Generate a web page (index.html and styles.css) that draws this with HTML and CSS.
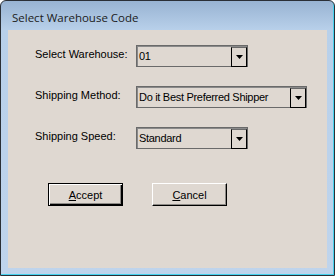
FILE: index.html
```html
<!DOCTYPE html>
<html lang="en">
<head>
	<meta charset="UTF-8">
	<title>Select Warehouse Code</title>
	<link rel="stylesheet" href="styles.css">
</head>
<body>
	<div class="window">
		<div class="title">Select Warehouse Code</div>
		<div class="client">
			<div class="form">
				<label class="label">Select Warehouse:</label>
				<div class="combo short">
					<span class="value">01</span>
					<span class="drop"><svg width="7" height="4" viewBox="0 0 7 4"><polygon points="0,0 7,0 3.5,4" fill="#000"/></svg></span>
				</div>

				<label class="label">Shipping Method:</label>
				<div class="combo long">
					<span class="value">Do it Best Preferred Shipper</span>
					<span class="drop"><svg width="7" height="4" viewBox="0 0 7 4"><polygon points="0,0 7,0 3.5,4" fill="#000"/></svg></span>
				</div>

				<label class="label">Shipping Speed:</label>
				<div class="combo short">
					<span class="value">Standard</span>
					<span class="drop"><svg width="7" height="4" viewBox="0 0 7 4"><polygon points="0,0 7,0 3.5,4" fill="#000"/></svg></span>
				</div>
			</div>

			<div class="buttons">
				<button class="btn default"><u>A</u>ccept</button>
				<button class="btn"><u>C</u>ancel</button>
			</div>
		</div>
	</div>
</body>
</html>
```

FILE: styles.css
```css
body, div {
	margin: 0;
	padding: 0;
}
body {
	background: #fff;
	font: 11px "Liberation Sans", Arial, sans-serif;
	color: #000;
}
.window {
	box-sizing: border-box;
	width: 335px;
	height: 276px;
	padding: 0 7px 7px 7px;
	border: 1px solid #2a2f36;
	border-radius: 6px 6px 0 0;
	background: linear-gradient(#98b3d2, #b8d0ea 29px, #bfd4ec);
	box-shadow: inset -1px -1px 0 #45d2ee;
	display: flex;
	flex-direction: column;
}
.title {
	box-sizing: border-box;
	height: 29px;
	padding: 4px 0 0 4px;
	font: 11.5px "Open Sans", "Noto Sans", sans-serif;
	line-height: 26px;
	color: #1b1b1b;
}
.client {
	flex: 1;
	background: #dfd8d1;
	padding: 15px 0 0 27px;
}
.form {
	display: grid;
	grid-template-columns: 101px auto;
	row-gap: 19px;
	align-items: center;
}
.label {
	padding-bottom: 4px;
}
.combo {
	box-sizing: border-box;
	height: 22px;
	border: 1px solid #6a6a6a;
	box-shadow: inset 1px 1px 0 #8a8a8a;
	display: flex;
	align-items: center;
}
.combo.short {
	width: 112px;
}
.combo.long {
	width: 171px;
}
.value {
	flex: 1;
	padding-left: 2px;
	letter-spacing: -0.3px;
	white-space: nowrap;
}
.drop {
	box-sizing: border-box;
	width: 16px;
	height: 20px;
	margin-top: 1px;
	border: 1px solid #000;
	border-top-color: #6a6a6a;
	display: flex;
	align-items: center;
	justify-content: center;
}
.buttons {
	display: flex;
	gap: 29px;
	margin-top: 34px;
	padding-left: 13px;
}
.btn {
	box-sizing: border-box;
	width: 75px;
	height: 23px;
	padding: 0;
	font: 11px "Liberation Sans", Arial, sans-serif;
	color: #000;
	background: #dfd8d1;
	border: 1px solid #fff;
	border-right-color: #000;
	border-bottom-color: #000;
	box-shadow: inset -1px -1px 0 #8d8a86;
}
.btn.default {
	border: 1px solid #000;
	box-shadow: inset 1px 1px 0 #fff, inset -1px -1px 0 #000, inset -2px -2px 0 #8d8a86;
}
```
